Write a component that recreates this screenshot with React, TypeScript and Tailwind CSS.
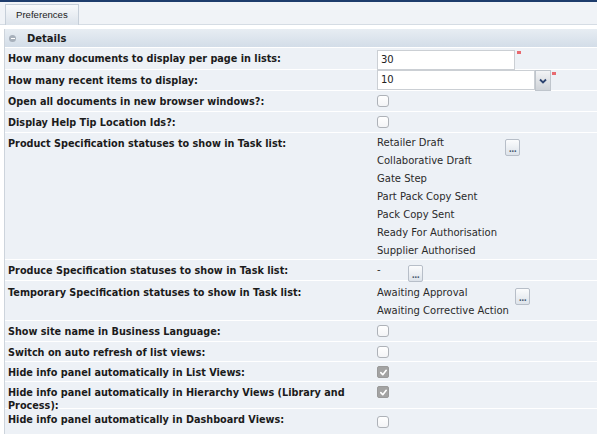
import React from "react";

const Check = ({ checked }: { checked?: boolean }) =>
  checked ? (
    <div className="w-[12px] h-[12px] rounded-[2px] bg-[#a3a3a3] border border-[#9a9a9a] flex items-center justify-center">
      <svg width="9" height="9" viewBox="0 0 10 10">
        <path d="M2 5.2 L4.2 7.4 L8 2.6" stroke="#fff" strokeWidth="1.8" fill="none" strokeLinecap="round" strokeLinejoin="round" />
      </svg>
    </div>
  ) : (
    <div className="w-[12px] h-[12px] rounded-[3px] bg-gradient-to-b from-white to-[#f3f4f6] border border-[#aeb2b8]" />
  );

const Dots = () => (
  <div className="w-[15px] h-[17px] rounded-[2px] border border-[#b7bec8] bg-gradient-to-b from-[#fbfcfd] to-[#dde3ea] flex items-end justify-center pb-[2px]">
    <span className="text-[8px] leading-[6px] text-[#4a5a70] font-bold tracking-[-0.5px]">...</span>
  </div>
);

const Row = ({
  label,
  h,
  children,
  pt = 4,
}: {
  label: React.ReactNode;
  h: number;
  children?: React.ReactNode;
  pt?: number;
}) => (
  <div className="flex border-b border-white bg-[#edf1f6]" style={{ height: h }}>
    <div
      className="w-[372px] shrink-0 pl-[3px] font-bold text-[#1b1b1b] text-[9.7px] leading-[13px]"
      style={{ paddingTop: pt }}
    >
      {label}
    </div>
    <div className="flex-1">{children}</div>
  </div>
);

export default function App() {
  const product = [
    "Retailer Draft",
    "Collaborative Draft",
    "Gate Step",
    "Part Pack Copy Sent",
    "Pack Copy Sent",
    "Ready For Authorisation",
    "Supplier Authorised",
  ];
  return (
    <div className="w-[597px] h-[434px] overflow-hidden bg-white font-['DejaVu_Sans',sans-serif]">
      <div className="h-[2px] bg-[#1d3c6c]" />
      <div className="h-[23px] bg-[#f0f3f7] border-b border-[#d5dce4] pl-[5px] pt-[2px] flex">
        <div className="h-[21px] px-[10px] border border-b-0 border-[#c6cfd9] bg-gradient-to-b from-[#f7f9fb] to-[#dce3eb] flex items-center font-['Liberation_Sans',sans-serif] text-[9.6px] text-[#222]">
          Preferences
        </div>
      </div>
      <div className="h-[4px] bg-white" />
      <div className="ml-[4px] border-l border-[#cdd4dc]">
        <div className="h-[19px] bg-gradient-to-b from-[#e7edf3] to-[#d3dde8] border-b border-white flex items-center pl-[4px]">
          <div className="w-[7px] h-[7px] rounded-full bg-[#a7b0bb] flex items-center justify-center">
            <div className="w-[4px] h-[1px] bg-white" />
          </div>
          <span className="ml-[11px] font-bold text-[10px] text-[#1b1b1b]">Details</span>
        </div>

        <Row label="How many documents to display per page in lists:" h={22}>
          <div className="flex pt-[2px]">
            <div className="w-[138px] h-[20px] bg-white border border-[#cbcfd4] text-[10px] text-[#222] pl-[3px] leading-[18px]">
              30
            </div>
            <div className="ml-[2px] mt-[1px] w-[4px] h-[3px] bg-[#e86a70]" />
          </div>
        </Row>
        <Row label="How many recent items to display:" h={21}>
          <div className="flex">
            <div className="w-[158px] h-[20px] bg-white border border-[#cbcfd4] text-[10px] text-[#222] pl-[3px] leading-[18px]">
              10
            </div>
            <div className="w-[16px] h-[21px] border border-[#bfc5cc] bg-gradient-to-b from-[#f3f4f6] to-[#cfd3d8] flex items-center justify-center">
              <svg width="8" height="6" viewBox="0 0 8 6">
                <path d="M1 1.5 L4 4.5 L7 1.5" stroke="#2d4470" strokeWidth="1.8" fill="none" />
              </svg>
            </div>
            <div className="ml-[1px] mt-[2px] w-[4px] h-[3px] bg-[#e86a70]" />
          </div>
        </Row>
        <Row label="Open all documents in new browser windows?:" h={21}>
          <div className="pt-[4px]"><Check /></div>
        </Row>
        <Row label="Display Help Tip Location Ids?:" h={21}>
          <div className="pt-[4px]"><Check /></div>
        </Row>
        <Row label="Product Specification statuses to show in Task list:" h={127}>
          <div className="flex">
            <div className="w-[128px] pt-[1px] text-[10px] leading-[18px] text-[#2a2a2a]">
              {product.map((p) => (
                <div key={p}>{p}</div>
              ))}
            </div>
            <div className="pt-[6px]"><Dots /></div>
          </div>
        </Row>
        <Row label="Produce Specification statuses to show in Task list:" h={21}>
          <div className="flex">
            <div className="w-[31px] pt-[1px] text-[10px] leading-[18px] text-[#2a2a2a]">-</div>
            <div className="pt-[5px]"><Dots /></div>
          </div>
        </Row>
        <Row label="Temporary Specification statuses to show in Task list:" h={40} pt={5}>
          <div className="flex">
            <div className="w-[138px] pt-[3px] text-[10px] leading-[18px] text-[#2a2a2a]">
              <div>Awaiting Approval</div>
              <div>Awaiting Corrective Action</div>
            </div>
            <div className="pt-[7px]"><Dots /></div>
          </div>
        </Row>
        <Row label="Show site name in Business Language:" h={21}>
          <div className="pt-[4px]"><Check /></div>
        </Row>
        <Row label="Switch on auto refresh of list views:" h={20}>
          <div className="pt-[4px]"><Check /></div>
        </Row>
        <Row label="Hide info panel automatically in List Views:" h={20}>
          <div className="pt-[4px]"><Check checked /></div>
        </Row>
        <Row label={<>Hide info panel automatically in Hierarchy Views (Library and<br />Process):</>} h={27}>
          <div className="pt-[4px]"><Check checked /></div>
        </Row>
        <Row label="Hide info panel automatically in Dashboard Views:" h={26}>
          <div className="pt-[7px]"><Check /></div>
        </Row>
      </div>
    </div>
  );
}
